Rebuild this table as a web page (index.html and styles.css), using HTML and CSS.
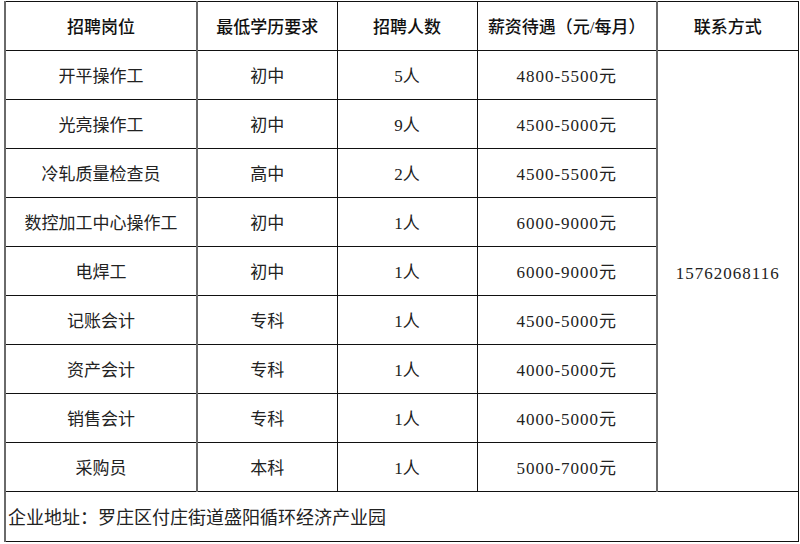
FILE: index.html
```html
<!DOCTYPE html>
<html lang="zh">
<head>
<meta charset="utf-8">
<link rel="stylesheet" href="styles.css">
</head>
<body>
<table class="jobs">
  <colgroup>
    <col class="c1"><col class="c2"><col class="c3"><col class="c4"><col class="c5">
  </colgroup>
  <thead>
    <tr class="head">
      <th class="sep">招聘岗位</th>
      <th>最低学历要求</th>
      <th>招聘人数</th>
      <th class="sep">薪资待遇（元/每月）</th>
      <th>联系方式</th>
    </tr>
  </thead>
  <tbody>
    <tr><td class="sep">开平操作工</td><td>初中</td><td>5人</td><td class="sep num">4800-5500元</td><td class="contact num" rowspan="9">15762068116</td></tr>
    <tr><td class="sep">光亮操作工</td><td>初中</td><td>9人</td><td class="sep num">4500-5000元</td></tr>
    <tr><td class="sep">冷轧质量检查员</td><td>高中</td><td>2人</td><td class="sep num">4500-5500元</td></tr>
    <tr><td class="sep">数控加工中心操作工</td><td>初中</td><td>1人</td><td class="sep num">6000-9000元</td></tr>
    <tr><td class="sep">电焊工</td><td>初中</td><td>1人</td><td class="sep num">6000-9000元</td></tr>
    <tr><td class="sep">记账会计</td><td>专科</td><td>1人</td><td class="sep num">4500-5000元</td></tr>
    <tr><td class="sep">资产会计</td><td>专科</td><td>1人</td><td class="sep num">4000-5000元</td></tr>
    <tr><td class="sep">销售会计</td><td>专科</td><td>1人</td><td class="sep num">4000-5000元</td></tr>
    <tr><td class="sep">采购员</td><td>本科</td><td>1人</td><td class="sep num">5000-7000元</td></tr>
    <tr><td class="address" colspan="5">企业地址：罗庄区付庄街道盛阳循环经济产业园</td></tr>
  </tbody>
</table>
</body>
</html>
```
FILE: styles.css
```css
html, body {
  margin: 0;
  padding: 0;
  background: #ffffff;
}
body {
  padding: 1px 0 0 4px;
  font-family: "Liberation Serif", "Noto Sans CJK SC", serif;
  color: #222222;
}
.jobs {
  border-collapse: collapse;
  table-layout: fixed;
  width: 793px;
  border-left: 2px solid #6a6a6a;
  border-top: 1px solid #111111;
  border-right: 1px solid #111111;
  border-bottom: 1px solid #111111;
}
.c1 { width: 192px; }
.c2 { width: 140px; }
.c3 { width: 140px; }
.c4 { width: 180px; }
.c5 { width: 141px; }
.jobs th,
.jobs td {
  border: 1px solid #111111;
  height: 49px;
  padding: 3px 0 0 0;
  text-align: center;
  vertical-align: middle;
  font-size: 17px;
  font-weight: normal;
  line-height: 20px;
  box-sizing: border-box;
}
.jobs th {
  color: #111111;
  font-weight: 500;
}
.jobs .sep {
  border-right: 2px solid #6a6a6a;
}
.jobs td.num {
  letter-spacing: 1px;
}
.jobs td.contact {
  vertical-align: middle;
  padding-top: 6px;
}
.jobs td.address {
  text-align: left;
  padding-left: 2px;
  height: 50px;
  font-size: 18px;
  letter-spacing: 0;
}
```
